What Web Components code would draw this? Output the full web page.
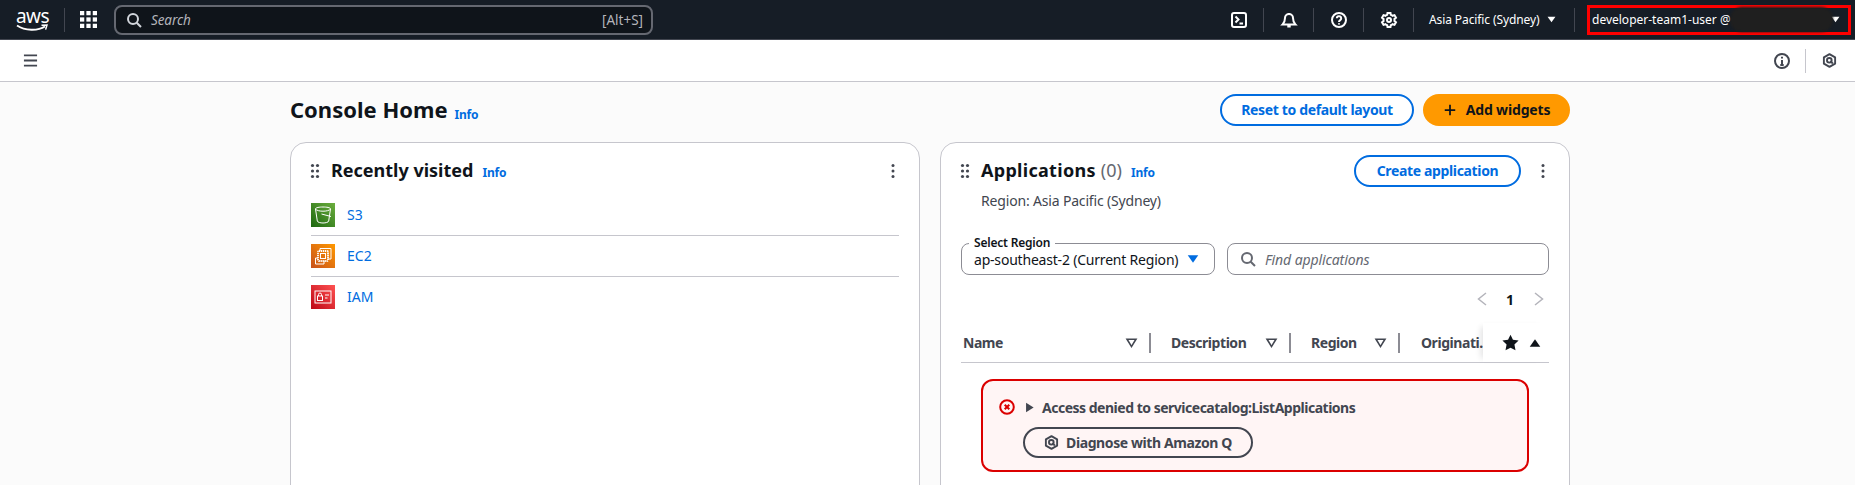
<!DOCTYPE html>
<html>
<head>
<meta charset="utf-8">
<title>Console Home</title>
<style>
  html, body { margin: 0; height: 485px; overflow: hidden; }
  body { background: #fbfbfb; font-family: "Noto Sans", "Open Sans", sans-serif; font-size: 14px; color: #0f141a; }
</style>
</head>
<body>
<console-app></console-app>

<script>
const ICONS = {
  search: `<circle cx="7" cy="7" r="5" fill="none"/><path d="M10.700 10.700 15 15" fill="none"/>`,
  terminal: `<rect x="1" y="1" width="14" height="14" rx="2" fill="none"/><path d="M4.500 4.500 7.500 7.500 4.500 10.500M8.500 11.500h3.500" fill="none"/>`,
  bell: `<path d="M8 2a4 4 0 0 0-4 4c0 3.600-1 5-2.400 6.400h12.800C13 11 12 9.600 12 6a4 4 0 0 0-4-4zM8 1v1M6.300 14.600h3.400" fill="none"/>`,
  help: `<circle cx="8" cy="8" r="7" fill="none"/><path d="M5.800 6.300a2.200 2.200 0 1 1 3.400 1.900C8.400 8.700 8 9.100 8 10M8 11.300v1.200" fill="none"/>`,
  gear: `<path d="M13.500 8c0-.4 0-.7-.1-1l1.600-1.300-1.500-2.600-2 .7c-.5-.4-1.100-.8-1.700-1L9.500 1h-3l-.3 1.800c-.6.2-1.200.6-1.700 1l-2-.7L1 5.700 2.600 7c-.1.3-.1.6-.1 1s0 .7.1 1L1 10.300l1.500 2.600 2-.7c.5.4 1.100.8 1.700 1l.3 1.800h3l.3-1.800c.6-.2 1.200-.6 1.700-1l2 .7 1.500-2.600L13.400 9c.1-.3.1-.6.1-1z" fill="none"/><circle cx="8" cy="8" r="2" fill="none"/>`,
  info: `<circle cx="8" cy="8" r="7" fill="none"/><path d="M8 7v5M6.300 12h3.400M8 3.800v1.600" fill="none"/>`,
  q: `<path d="M8 1.200 14 4.600v6.800L8 14.800 2 11.400V4.600z" fill="none" stroke-linejoin="round"/><circle cx="7.800" cy="7.800" r="2.500" fill="none"/><path d="M8.800 8.800 11.600 11.200" fill="none"/>`,
  menu: `<path d="M1 2.500h14M1 8h14M1 13.500h14" fill="none"/>`,
  plus: `<path d="M8 2v12M2 8h12" fill="none"/>`,
  filter: `<path d="M2.500 4h11L8 13z" fill="none"/>`,
  prev: `<path d="M12 2 4.500 8l7.500 6" fill="none"/>`,
  next: `<path d="M4 2l7.500 6L4 14" fill="none"/>`,
  error: `<circle cx="8" cy="8" r="6.800" fill="none"/><path d="M5.700 5.700l4.600 4.600M10.300 5.700l-4.600 4.600" fill="none"/>`,
  caret: `<path d="M1 3h14L8 13z" fill="currentColor" stroke="none"/>`,
  up: `<path d="M1 13h14L8 3z" fill="currentColor" stroke="none"/>`,
  right: `<path d="M3 1v14l11-7z" fill="currentColor" stroke="none"/>`,
  star: `<path d="M8 .6l2.300 4.900 5.300.7-3.900 3.700 1 5.300L8 12.900l-4.700 2.300 1-5.300L.4 6.200l5.300-.7z" fill="currentColor" stroke="none"/>`,
  grid: `<g fill="currentColor" stroke="none"><rect x="0" y="0" width="4" height="4"/><rect x="6" y="0" width="4" height="4"/><rect x="12" y="0" width="4" height="4"/><rect x="0" y="6" width="4" height="4"/><rect x="6" y="6" width="4" height="4"/><rect x="12" y="6" width="4" height="4"/><rect x="0" y="12" width="4" height="4"/><rect x="6" y="12" width="4" height="4"/><rect x="12" y="12" width="4" height="4"/></g>`,
  kebab: `<g fill="currentColor" stroke="none"><circle cx="8" cy="2.500" r="1.500"/><circle cx="8" cy="8" r="1.500"/><circle cx="8" cy="13.500" r="1.500"/></g>`,
  grip: `<g fill="currentColor" stroke="none"><circle cx="5.500" cy="2.500" r="1.600"/><circle cx="10.500" cy="2.500" r="1.600"/><circle cx="5.500" cy="8" r="1.600"/><circle cx="10.500" cy="8" r="1.600"/><circle cx="5.500" cy="13.500" r="1.600"/><circle cx="10.500" cy="13.500" r="1.600"/></g>`
};

class UiIcon extends HTMLElement {
  connectedCallback() {
    const size = this.getAttribute("size") || 16;
    const weight = this.getAttribute("weight") || 2;
    this.attachShadow({ mode: "open" });
    this.shadowRoot.innerHTML = `
    <style>
      :host { display: inline-flex; flex: none; width: ${size}px; height: ${size}px; }
      svg { display: block; width: 100%; height: 100%; stroke: currentColor; stroke-width: ${weight}; overflow: visible; }
    </style>
    <svg viewBox="0 0 16 16">${ICONS[this.getAttribute("name")]}</svg>`;
  }
}
customElements.define("ui-icon", UiIcon);

class InfoLink extends HTMLElement {
  connectedCallback() {
    this.attachShadow({ mode: "open" });
    this.shadowRoot.innerHTML = `
    <style>
      :host { display: inline-block; font-size: 12px; font-weight: 700; color: #006ce0; line-height: 16px; letter-spacing: -.2px; }
    </style>
    <slot>Info</slot>`;
  }
}
customElements.define("info-link", InfoLink);

class UiButton extends HTMLElement {
  connectedCallback() {
    this.attachShadow({ mode: "open" });
    this.shadowRoot.innerHTML = `
    <style>
      :host {
        display: inline-flex; align-items: center; justify-content: center; gap: 10px;
        box-sizing: border-box; height: 32px; border: 2px solid #006ce0; border-radius: 16px;
        background: #fff; color: #006ce0; font-size: 14px; font-weight: 700; line-height: 20px; white-space: nowrap;
        letter-spacing: -.35px;
      }
      :host([variant="primary"]) { background: #ff9900; border-color: #ff9900; color: #0f141a; letter-spacing: -.15px; gap: 9px; }
      :host([variant="neutral"]) { background: transparent; border-color: #424650; color: #424650; height: 31px; letter-spacing: -.4px; }
    </style>
    <slot></slot>`;
  }
}
customElements.define("ui-button", UiButton);

class TopBar extends HTMLElement {
  connectedCallback() {
    this.attachShadow({ mode: "open" });
    this.shadowRoot.innerHTML = `
    <style>
      :host {
        display: flex; align-items: center; height: 39px; box-sizing: content-box;
        background: #161d26; color: #fff; border-bottom: 1px solid #424650; font-size: 12px;
      }
      .logo { position: relative; width: 32px; height: 24px; margin-left: 16px; flex: none; }
      .logo span { display: block; font: 400 19px/17px "Noto Sans", sans-serif; letter-spacing: -.6px; color: #fff; }
      .logo svg { display: block; margin-top: -1px; }
      .sep { width: 1px; height: 24px; background: #424650; flex: none; }
      .sep.first { margin-left: 16px; }
      .apps { margin: 0 17px 0 15px; color: #fff; }
      .search {
        display: flex; align-items: center; box-sizing: border-box; width: 539px; height: 30px;
        background: #0f141a; border: 2px solid #656871; border-radius: 8px; padding: 0 8px 0 10px; color: #b4b4bb;
      }
      .search ui-icon { color: #d1d5db; margin-right: 9px; }
      .search i { font-size: 13.500px; letter-spacing: -.1px; flex: 1; }
      .search span { font-size: 13.500px; }
      .right { display: flex; align-items: center; margin-left: auto; }
      .nav { display: flex; align-items: center; justify-content: center; width: 49px; color: #fff; }
      .region { display: flex; align-items: center; margin-left: 15px; width: 145px; white-space: nowrap; color: #fff; font-size: 12px; letter-spacing: -.1px; }
      .region ui-icon { margin-left: 7px; }
      .account {
        position: relative; display: flex; align-items: center; justify-content: space-between; box-sizing: border-box;
        width: 264px; height: 30px; margin: 0 4px 0 12px; border: 3px solid #f00; padding: 0 8px 0 2px;
        white-space: nowrap; color: #fff; font-size: 12px;
      }
      .smudge {
        position: absolute; left: 140px; top: -1px; width: 103px; height: 25px; border-radius: 12px;
        background: #1f1f1f; filter: blur(1px);
      }
    </style>
    <div class="logo">
      <span>aws</span>
      <svg width="32" height="8" viewBox="0 0 32 8">
        <path d="M1 1.500C9 7 22 7 29 2.500" fill="none" stroke="#fff" stroke-width="1.800"/>
        <path d="M25.500 1.200 31 1l-1.400 4.600" fill="none" stroke="#fff" stroke-width="1.500"/>
      </svg>
    </div>
    <div class="sep first"></div>
    <ui-icon class="apps" name="grid" size="17"></ui-icon>
    <div class="search">
      <ui-icon name="search" size="16"></ui-icon>
      <i>Search</i>
      <span>[Alt+S]</span>
    </div>
    <div class="right">
      <div class="nav"><ui-icon name="terminal" size="16"></ui-icon></div><div class="sep"></div>
      <div class="nav"><ui-icon name="bell" size="16"></ui-icon></div><div class="sep"></div>
      <div class="nav"><ui-icon name="help" size="16"></ui-icon></div><div class="sep"></div>
      <div class="nav"><ui-icon name="gear" size="16"></ui-icon></div><div class="sep"></div>
      <div class="region">Asia Pacific (Sydney)<ui-icon name="caret" size="9"></ui-icon></div>
      <div class="sep"></div>
      <div class="account">
        <span>developer-team1-user @</span>
        <div class="smudge"></div>
        <ui-icon name="caret" size="9"></ui-icon>
      </div>
    </div>`;
  }
}
customElements.define("top-bar", TopBar);

class SubBar extends HTMLElement {
  connectedCallback() {
    this.attachShadow({ mode: "open" });
    this.shadowRoot.innerHTML = `
    <style>
      :host {
        display: flex; align-items: center; height: 41px; background: #fff;
        border-bottom: 1px solid #c6c6cd; color: #424650; padding: 0 18px 0 23px;
      }
      .info { margin-left: auto; }
      .sep { width: 1px; height: 24px; background: #c6c6cd; margin: 0 16px 0 15px; }
    </style>
    <ui-icon name="menu" size="15"></ui-icon>
    <ui-icon class="info" name="info" size="16"></ui-icon>
    <div class="sep"></div>
    <ui-icon name="q" size="15"></ui-icon>`;
  }
}
customElements.define("sub-bar", SubBar);

class WidgetCard extends HTMLElement {
  connectedCallback() {
    this.attachShadow({ mode: "open" });
    this.shadowRoot.innerHTML = `
    <style>
      :host {
        display: block; box-sizing: border-box; height: 400px; background: #fff;
        border: 1px solid #c6c6cd; border-radius: 16px; padding: 12px 20px 0;
      }
      header { display: flex; align-items: flex-start; min-height: 32px; }
      .grip { color: #424650; margin: 8px 8px 0 -4px; }
      .title { display: flex; align-items: baseline; gap: 9px; font-size: 18px; font-weight: 700; line-height: 30px; }
      .actions { margin-left: auto; display: flex; align-items: center; height: 32px; }
    </style>
    <header>
      <ui-icon class="grip" name="grip" size="16"></ui-icon>
      <div class="title"><slot name="title"></slot></div>
      <div class="actions"><slot name="actions"></slot></div>
    </header>
    <slot></slot>`;
  }
}
customElements.define("widget-card", WidgetCard);

class ServiceRow extends HTMLElement {
  connectedCallback() {
    const kind = this.getAttribute("kind");
    const art = {
      s3: { a: "#1b660f", b: "#6cae3e", d: `<path d="M4.500 6C4.500 4.500 8.500 4 12 4s7.500 .5 7.500 2l-1.800 12c-.2 1.300-3.200 2-5.700 2s-5.500-.7-5.700-2zM4.500 6c1 1.600 4.500 2.200 7.500 2.200S18.500 7.600 19.500 6M10.500 11l9.500 2.500" fill="none" stroke="#fff" stroke-width="1"/>` },
      ec2: { a: "#c8511b", b: "#ff9900", d: `<path d="M9 7V4.500h11V15h-3M7 14H4.500v6H13v-3" fill="none" stroke="#fff" stroke-width="1"/><rect x="7" y="7" width="10" height="10" rx="1" fill="none" stroke="#fff" stroke-width="1.800" stroke-dasharray="1.300 .7"/><rect x="9.500" y="9.500" width="5" height="5" fill="none" stroke="#fff" stroke-width="1"/>` },
      iam: { a: "#bd0816", b: "#ff5252", d: `<rect x="4" y="6" width="16" height="12" fill="none" stroke="#fff" stroke-width="1"/><rect x="6.500" y="11" width="5" height="4.500" fill="none" stroke="#fff" stroke-width="1"/><path d="M7.500 11V9.500a1.500 1.500 0 0 1 3 0V11M14 10h4M14 13h2.500" fill="none" stroke="#fff" stroke-width="1"/>` }
    }[kind];
    this.attachShadow({ mode: "open" });
    this.shadowRoot.innerHTML = `
    <style>
      :host {
        display: flex; align-items: center; gap: 12px; height: 24px; padding: 8px 0;
        border-top: 1px solid #c6c6cd; color: #006ce0; font-size: 14px; line-height: 20px;
      }
      :host(:first-of-type) { border-top: 0; }
      svg { display: block; flex: none; }
    </style>
    <svg width="24" height="24" viewBox="0 0 24 24">
      <defs><linearGradient id="g" x1="0" y1="1" x2="1" y2="0"><stop offset="0" stop-color="${art.a}"/><stop offset="1" stop-color="${art.b}"/></linearGradient></defs>
      <rect width="24" height="24" fill="url(#g)"/>${art.d}
    </svg>
    <slot></slot>`;
  }
}
customElements.define("service-row", ServiceRow);

class AppTable extends HTMLElement {
  connectedCallback() {
    this.attachShadow({ mode: "open" });
    this.shadowRoot.innerHTML = `
    <style>
      :host { display: block; position: relative; color: #424650; font-size: 14px; font-weight: 700; letter-spacing: -.45px; }
      .head { display: flex; align-items: center; height: 39px; border-bottom: 1px solid #c6c6cd; box-sizing: content-box; }
      .col { display: flex; align-items: center; box-sizing: border-box; height: 20px; flex: none; white-space: nowrap; }
      .col span { flex: 1; }
      .col ui-icon { margin-right: 11px; }
      .col.bar { border-right: 2px solid #8c8c94; }
      .name { width: 190px; padding-left: 2px; }
      .desc { width: 140px; padding-left: 20px; }
      .reg { width: 109px; padding-left: 20px; }
      .orig { padding-left: 21px; width: 83px; }
      .sticky {
        display: flex; align-items: center; gap: 10px; flex: 1; align-self: stretch; background: #fff; padding-left: 19px;
        color: #0f141a; box-shadow: -6px 0 6px -4px rgba(15,20,26,.12);
      }
    </style>
    <div class="head">
      <div class="col bar name"><span>Name</span><ui-icon name="filter" size="13" weight="2"></ui-icon></div>
      <div class="col bar desc"><span>Description</span><ui-icon name="filter" size="13" weight="2"></ui-icon></div>
      <div class="col bar reg"><span>Region</span><ui-icon name="filter" size="13" weight="2"></ui-icon></div>
      <div class="col orig">Originati.</div>
      <div class="sticky"><ui-icon name="star" size="17"></ui-icon><ui-icon name="up" size="12"></ui-icon></div>
    </div>`;
  }
}
customElements.define("app-table", AppTable);

class ErrorBox extends HTMLElement {
  connectedCallback() {
    this.attachShadow({ mode: "open" });
    this.shadowRoot.innerHTML = `
    <style>
      :host {
        display: block; box-sizing: border-box; height: 93px; margin: 16px 20px 0;
        width: 548px; background: #fff5f5; border: 2px solid #db0000; border-radius: 12px; padding: 15px 16px 0;
      }
      .row { display: flex; align-items: center; height: 22px; color: #424650; font-weight: 700; font-size: 14px; letter-spacing: -.49px; }
      .err { color: #db0000; margin-right: 9px; }
      .tri { color: #424650; margin-right: 7px; }
      ui-button { margin: 9px 0 0 24px; width: 230px; }
      ui-button ui-icon { margin-right: -3px; }
    </style>
    <div class="row">
      <ui-icon class="err" name="error" size="16"></ui-icon>
      <ui-icon class="tri" name="right" size="11"></ui-icon>
      <slot></slot>
    </div>
    <ui-button variant="neutral"><ui-icon name="q" size="15"></ui-icon>Diagnose with Amazon Q</ui-button>`;
  }
}
customElements.define("error-box", ErrorBox);

class ConsoleApp extends HTMLElement {
  connectedCallback() {
    this.attachShadow({ mode: "open" });
    this.shadowRoot.innerHTML = `
    <style>
      :host { display: block; }
      main { padding: 12px 285px 0 290px; }
      .page-head { display: flex; align-items: center; height: 32px; margin-bottom: 16px; }
      h1 { margin: -2px 0 0; font-size: 22px; line-height: 32px; font-weight: 700; }
      .page-head info-link { margin: 10px 0 0 7px; }
      .page-head .btns { margin-left: auto; display: flex; gap: 9px; }
      .reset { width: 194px; }
      .add { width: 147px; }
      .cards { display: grid; grid-template-columns: 630px 630px; gap: 20px; }
      .list { display: block; margin-top: 8px; }
      .kebab { color: #424650; margin-right: -2px; }
      .apps-title { letter-spacing: .3px; }
      .count { color: #656871; font-weight: 400; margin-left: -4px; }
      .create { width: 167px; }
      .actions { display: flex; align-items: center; gap: 14px; }
      .sub { color: #424650; font-size: 14px; line-height: 20px; margin: 4px 0 0 20px; letter-spacing: -.17px; }
      .filters { display: flex; gap: 12px; margin-top: 32px; }
      .select, .find {
        position: relative; display: flex; align-items: center; box-sizing: border-box; height: 32px;
        border: 1px solid #8c8c94; border-radius: 8px; background: #fff; white-space: nowrap;
      }
      .select { width: 254px; padding: 0 15px 0 12px; justify-content: space-between; letter-spacing: -.2px; }
      .select label {
        position: absolute; left: 7px; top: -8px; background: #fff; padding: 0 5px;
        font-size: 12px; font-weight: 600; line-height: 14px; color: #0f141a;
      }
      .select ui-icon { color: #006ce0; }
      .find { flex: 1; padding-left: 12px; color: #656871; gap: 9px; }
      .find i { font-size: 14px; letter-spacing: -.1px; }
      .pager { display: flex; align-items: center; justify-content: flex-end; height: 20px; margin-top: 14px; font-weight: 700; padding-right: 2px; }
      .pager ui-icon { color: #b4b4bb; }
      .pager span { margin: 0 17px 0 16px; font-size: 14px; }
      app-table { margin-top: 14px; }
    </style>
    <top-bar></top-bar>
    <sub-bar></sub-bar>
    <main>
      <div class="page-head">
        <h1>Console Home</h1><info-link>Info</info-link>
        <div class="btns">
          <ui-button class="reset">Reset to default layout</ui-button>
          <ui-button class="add" variant="primary"><ui-icon name="plus" size="14"></ui-icon>Add widgets</ui-button>
        </div>
      </div>
      <div class="cards">
        <widget-card>
          <span slot="title">Recently visited</span>
          <info-link slot="title">Info</info-link>
          <ui-icon slot="actions" class="kebab" name="kebab" size="16"></ui-icon>
          <div class="list">
            <service-row kind="s3">S3</service-row>
            <service-row kind="ec2">EC2</service-row>
            <service-row kind="iam">IAM</service-row>
          </div>
        </widget-card>
        <widget-card>
          <span slot="title" class="apps-title">Applications</span>
          <span slot="title" class="count">(0)</span>
          <info-link slot="title">Info</info-link>
          <div slot="actions" class="actions">
            <ui-button class="create">Create application</ui-button>
            <ui-icon class="kebab" name="kebab" size="16"></ui-icon>
          </div>
          <div class="sub">Region: Asia Pacific (Sydney)</div>
          <div class="filters">
            <div class="select">
              <label>Select Region</label>
              <span>ap-southeast-2 (Current Region)</span>
              <ui-icon name="caret" size="12"></ui-icon>
            </div>
            <div class="find"><ui-icon name="search" size="16"></ui-icon><i>Find applications</i></div>
          </div>
          <div class="pager">
            <ui-icon name="prev" size="16" weight="1.500"></ui-icon><span>1</span><ui-icon name="next" size="16" weight="1.500"></ui-icon>
          </div>
          <app-table></app-table>
          <error-box>Access denied to servicecatalog:ListApplications</error-box>
        </widget-card>
      </div>
    </main>`;
  }
}
customElements.define("console-app", ConsoleApp);
</script>
</body>
</html>
